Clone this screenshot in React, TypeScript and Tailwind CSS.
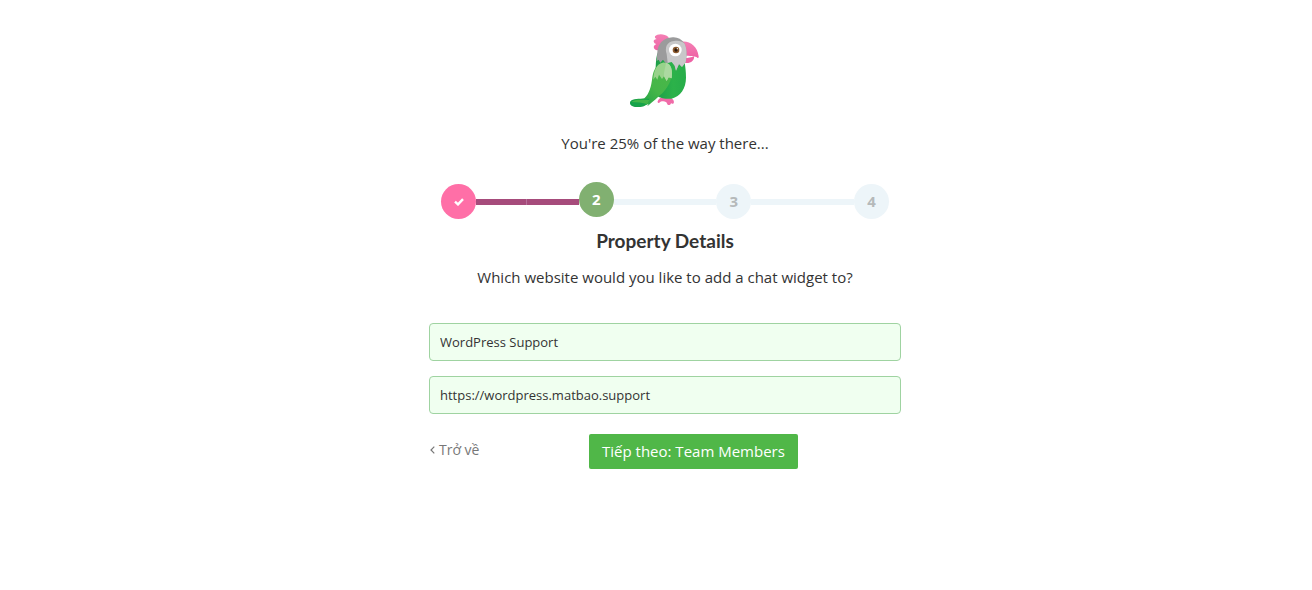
import React, { useState } from "react";

const Parrot = () => {
    return (
        <svg viewBox="39 24 222 225" className="h-[75px] w-[74px]" role="img" aria-label="Parrot">
            <defs>
                <linearGradient id="body" x1="0" y1="0" x2="1" y2="0">
                    <stop offset="0" stopColor="#1a9c48" />
                    <stop offset="0.6" stopColor="#2cb24a" />
                    <stop offset="1" stopColor="#27ad4a" />
                </linearGradient>
                <linearGradient id="wing" x1="1" y1="0" x2="0" y2="1">
                    <stop offset="0" stopColor="#4bb848" />
                    <stop offset="0.5" stopColor="#45b649" />
                    <stop offset="1" stopColor="#129b48" />
                </linearGradient>
                <linearGradient id="beak" x1="0" y1="0" x2="0" y2="1">
                    <stop offset="0" stopColor="#f47fb4" />
                    <stop offset="1" stopColor="#ee62a4" />
                </linearGradient>
            </defs>
            {/* crest */}
            <path d="M160 36 C149 25 127 25 120 34 C119 38 121 41 125 42 C117 43 114 48 117 52 C118 55 121 57 124 57 C117 60 114 66 118 71 C121 75 125 76 129 76 L134 82 L164 46 Z" fill="url(#beak)" />
            {/* beak */}
            <path d="M198 50 C224 46 247 63 251 94 C252 98 249 101 247 98 C240 92 231 94 214 92 Z" fill="url(#beak)" />
            <path d="M208 100 C219 99 230 97 237 94 C239 107 227 116 210 114 Z" fill="#ee62a4" />
            {/* feet */}
            <path d="M128 229 C132 216 146 213 164 218 C174 220 179 228 176 235 C172 238 169 236 168 234 C168 239 162 242 158 239 L154 232 C146 227 138 229 133 233 C129 235 127 232 128 229 Z" fill="#f06ba8" />
            {/* body */}
            <path d="M130 80 C123 92 123 108 122 126 L116 190 L124 212 C140 222 158 222 170 221 C196 214 213 190 213 158 C213 140 211 127 209 112 Z" fill="url(#body)" />
            {/* head */}
            <path d="M173 37 C145 38 128 57 127 82 L125 108 L131 104 L136 113 L144 104 L154 117 L168 105 L179 122 L183 137 L192 117 L201 126 L212 112 C216 91 216 70 208 55 C200 42 187 36 173 37 Z" fill="#9b9b9c" />
            <path d="M177 48 C154 50 149 70 155 87 L158 114 L170 111 L179 122 L183 137 L192 117 L201 126 L212 112 C216 91 216 70 208 55 C200 48 190 46 177 48 Z" fill="#c8c8c9" />
            <circle cx="181" cy="75" r="19" fill="#fff" />
            <circle cx="183" cy="75" r="10" fill="#8c5a2d" />
            <circle cx="183" cy="75" r="5" fill="#2c1a10" />
            <circle cx="187" cy="71" r="2" fill="#fff" />
            {/* wing and tail */}
            <path d="M143 113 C126 117 115 134 112 157 C109 184 103 207 88 220 C75 223 52 219 46 230 C42 241 54 245 65 246 C83 248 92 240 101 236 C98 241 96 243 99 242 C116 229 129 216 142 205 C165 181 172 156 170 138 Z" fill="url(#wing)" />
            <path d="M46 230 C55 222 78 222 103 221 L97 237 C82 245 63 248 51 241 C45 238 45 233 46 230 Z" fill="#16a34a" />
            <path d="M103 225 C82 224 58 222 49 231 C65 231 83 233 97 238 Z" fill="#43b649" />
            <path d="M143 113 C126 117 116 134 115 164 L121 155 L127 164 L132 149 L141 162 L147 154 L155 168 L161 157 L170 160 C173 137 169 110 143 113 Z" fill="#98d28b" />
            <path d="M153 113 C151 129 146 140 147 154 L155 168 L161 157 L170 160 C173 137 170 116 153 113 Z" fill="#abd9a0" />
        </svg>
    )
}

const Step = ({ label }: { label: string }) => {
    return (
        <li className="flex h-[35px] w-[35px] shrink-0 items-center justify-center rounded-full bg-[#edf5f9] pb-0.5 text-[15px] font-bold text-[#b5b9ba]">
            {label}
        </li>
    )
}

const PropertyDetails = () => {
    const [name, setName] = useState("WordPress Support");
    const [site, setSite] = useState("https://wordpress.matbao.support");
    const handleSubmit = (e: any) => {
        e.preventDefault();
    }

    return (
        <div className="min-h-screen bg-white pl-[18px] font-['Open_Sans',sans-serif] text-[15px] leading-5 text-[#333]">
            <main className="mx-auto flex w-full max-w-[472px] flex-col items-center pt-[33px]">
                <Parrot />
                <p className="mt-[25px]">You're 25% of the way there...</p>

                <ol className="mt-[29px] flex w-full items-center px-3">
                    <li className="flex h-[35px] w-[35px] shrink-0 items-center justify-center rounded-full bg-[#ff6fa7]">
                        <svg viewBox="0 0 10 8" className="h-2 w-2.5" role="img" aria-label="Done">
                            <path d="M1 3.6 L4 6.4 L9 1.2" fill="none" stroke="#fff" strokeWidth="2.4" />
                        </svg>
                    </li>
                    <li aria-hidden="true" className="flex h-1.5 flex-1">
                        <span className="w-1/2 border-r border-[#b7709a] bg-[#a64b7b]"></span>
                        <span className="w-1/2 bg-[#a64b7b]"></span>
                    </li>
                    <li aria-current="step" className="mb-1 flex h-[35px] w-[35px] shrink-0 items-center justify-center rounded-full bg-[#81b071] pb-0.5 text-[15px] font-bold text-white">
                        2
                    </li>
                    <li aria-hidden="true" className="h-1.5 flex-1 bg-[#edf5f9]"></li>
                    <Step label="3" />
                    <li aria-hidden="true" className="h-1.5 flex-1 bg-[#edf5f9]"></li>
                    <Step label="4" />
                </ol>

                <h1 className="mt-2 font-['Lato',sans-serif] text-[19px] font-bold leading-6">Property Details</h1>
                <p className="mt-3.5">Which website would you like to add a chat widget to?</p>

                <form onSubmit={handleSubmit} className="mt-9 w-full">
                    <input
                        type="text"
                        name="name"
                        aria-label="Property name"
                        value={name}
                        onChange={(e) => setName(e.target.value)}
                        className="block h-[38px] w-full rounded border border-[#9fd3a1] bg-[#f0fff0] px-2.5 text-[13px] outline-none"
                    />
                    <input
                        type="text"
                        name="site"
                        aria-label="Website address"
                        value={site}
                        onChange={(e) => setSite(e.target.value)}
                        className="mt-[15px] block h-[38px] w-full rounded border border-[#9fd3a1] bg-[#f0fff0] px-2.5 text-[13px] outline-none"
                    />
                    <div className="mt-5 grid grid-cols-[160px_auto] items-start justify-start">
                        <a href="#" className="mt-1.5 flex items-center gap-1 pl-px text-sm text-[#777]">
                            <svg viewBox="0 0 5 8" className="h-2 w-[5px]" aria-hidden="true">
                                <path d="M4.3 0.7 L1 4 L4.3 7.3" fill="none" stroke="#777" strokeWidth="1.2" />
                            </svg>
                            Trở về
                        </a>
                        <button type="submit" className="h-[35px] rounded-xs bg-[#50b748] px-[13px] pb-0.5 font-medium text-white">
                            Tiếp theo: Team Members
                        </button>
                    </div>
                </form>
            </main>
        </div>
    )
};
export default PropertyDetails;
